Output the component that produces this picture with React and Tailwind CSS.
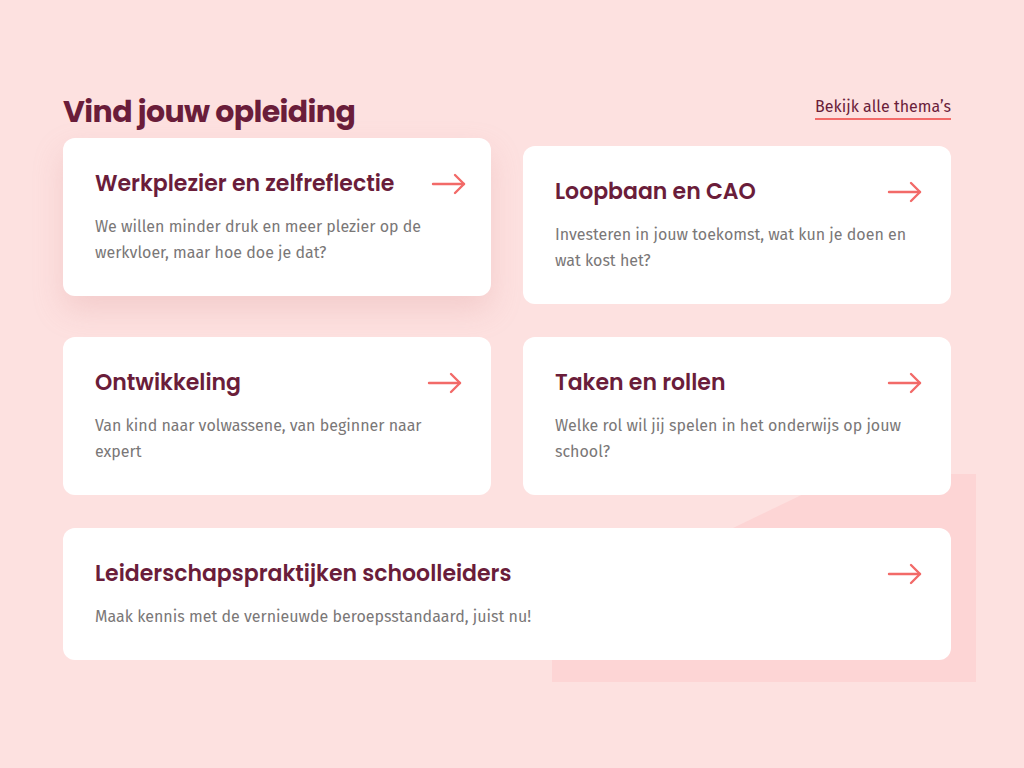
import React from "react";

const cards = [
  { title: "Werkplezier en zelfreflectie", text: "We willen minder druk en meer plezier op de werkvloer, maar hoe doe je dat?", active: true },
  { title: "Loopbaan en CAO", text: "Investeren in jouw toekomst, wat kun je doen en wat kost het?" },
  { title: "Ontwikkeling", text: "Van kind naar volwassene, van beginner naar expert" },
  { title: "Taken en rollen", text: "Welke rol wil jij spelen in het onderwijs op jouw school?" },
  { title: "Leiderschapspraktijken schoolleiders", text: "Maak kennis met de vernieuwde beroepsstandaard, juist nu!", wide: true },
];

function Arrow({ active }) {
  return (
    <svg
      width="36"
      height="22"
      viewBox="0 0 36 22"
      fill="none"
      stroke="#f26a68"
      strokeWidth="2.4"
      strokeLinecap="round"
      strokeLinejoin="round"
      className={active ? "shrink-0 translate-x-1" : "shrink-0"}
    >
      <path d="M2 11 H33" />
      <path d="M24 2 L33 11 L24 20" />
    </svg>
  );
}

function Card({ title, text, active, wide }) {
  return (
    <div
      className={
        "relative rounded-xl bg-white pt-8 pb-[30px] pl-8 pr-7 " +
        (wide ? "col-span-2 " : "") +
        (active ? "-translate-y-2 shadow-[0_14px_30px_rgba(220,150,150,0.28)]" : "")
      }
    >
      <div className="flex items-center justify-between">
        <h3 className="font-['Poppins','Inter',sans-serif] text-[22px] leading-7 font-semibold text-[#6a1d3a]">
          {title}
        </h3>
        <Arrow active={active} />
      </div>
      <p
        className={
          "mt-4 font-['Fira_Sans','Open_Sans',sans-serif] text-[16px] leading-[26px] text-[#7a7777] " +
          (wide ? "" : "max-w-[364px]")
        }
      >
        {text}
      </p>
    </div>
  );
}

export default function App() {
  return (
    <div className="relative min-h-screen w-full overflow-hidden bg-[#fde1e0]">
      <svg
        className="absolute left-0 top-0"
        width="1024"
        height="768"
        viewBox="0 0 1024 768"
      >
        <path d="M845 474 L976 474 L976 682 L552 682 L552 655 L733 528 Z" fill="#fdd5d5" />
      </svg>
      <div className="relative ml-[63px] w-[888px] pt-[94px]">
        <div className="mb-4 flex items-center justify-between">
          <h2 className="font-['Poppins','Inter',sans-serif] text-[30px] leading-9 font-bold tracking-[-0.6px] text-[#6a1d3a]">
            Vind jouw opleiding
          </h2>
          <a className="-mt-2 border-b-2 border-[#f26a68] pb-[1px] font-['Fira_Sans','Open_Sans',sans-serif] text-[16px] leading-5 text-[#6a1d3a]">
            Bekijk alle thema’s
          </a>
        </div>
        <div className="grid grid-cols-2 gap-x-8 gap-y-[33px]">
          {cards.map((c) => (
            <Card key={c.title} {...c} />
          ))}
        </div>
      </div>
    </div>
  );
}
